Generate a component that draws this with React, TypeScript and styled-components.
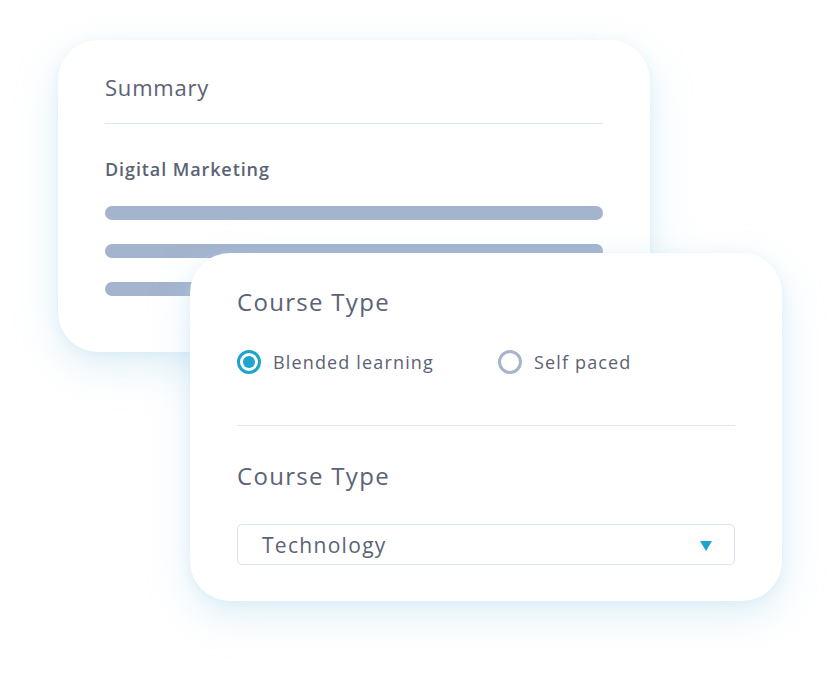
import React from 'react';
import styled, { createGlobalStyle } from 'styled-components';

const GlobalStyle = createGlobalStyle`
  html, body {
    margin: 0;
    padding: 0;
    background: #ffffff;
  }
  body {
    font-family: 'Open Sans', 'Lato', sans-serif;
    color: #565d70;
  }
`;

const Canvas = styled.div`
  width: 840px;
  height: 677px;
  padding-top: 40px;
  box-sizing: border-box;
  overflow: hidden;
`;

const Card = styled.div<{ $left: number; $width: number; $height: number; $overlap?: number }>`
  margin-left: ${(p) => p.$left}px;
  margin-top: ${(p) => (p.$overlap ? -p.$overlap : 0)}px;
  width: ${(p) => p.$width}px;
  height: ${(p) => p.$height}px;
  box-sizing: border-box;
  background: #ffffff;
  border-radius: 40px;
  box-shadow: 0 14px 40px rgba(160, 210, 235, 0.35), 0 2px 10px rgba(190, 225, 240, 0.25);
  position: relative;
`;

const SummaryBody = styled.div`
  padding: 33px 47px 0 47px;
  display: flex;
  flex-direction: column;
`;

const SummaryTitle = styled.div`
  font-size: 22px;
  line-height: 28px;
  color: #5b6275;
  letter-spacing: 0.8px;
`;

const Divider = styled.div<{ $gap: number }>`
  height: 1px;
  background: #dce8ee;
  margin-top: ${(p) => p.$gap}px;
`;

const Subtitle = styled.div`
  margin-top: 33px;
  font-size: 18px;
  font-weight: 600;
  line-height: 24px;
  color: #5b6275;
  letter-spacing: 0.9px;
`;

const Bars = styled.div`
  margin-top: 25px;
  display: flex;
  flex-direction: column;
  gap: 24px;
`;

const Bar = styled.div`
  height: 14px;
  border-radius: 7px;
  background: #a4b3ce;
`;

const CourseBody = styled.div`
  padding: 33px 47px 0 47px;
  display: flex;
  flex-direction: column;
`;

const SectionTitle = styled.div<{ $gap?: number }>`
  margin-top: ${(p) => p.$gap ?? 0}px;
  font-size: 24px;
  line-height: 32px;
  color: #5b6275;
  letter-spacing: 1.3px;
`;

const RadioRow = styled.div`
  margin-top: 32px;
  display: flex;
  align-items: center;
  height: 24px;
`;

const RadioOption = styled.label<{ $width?: number }>`
  display: flex;
  align-items: center;
  gap: 12px;
  width: ${(p) => (p.$width ? `${p.$width}px` : 'auto')};
  font-size: 18px;
  color: #5b6275;
  letter-spacing: 1.15px;
`;

const RadioCircle = styled.span<{ $checked?: boolean }>`
  width: 24px;
  height: 24px;
  box-sizing: border-box;
  border-radius: 50%;
  border: 3px solid ${(p) => (p.$checked ? '#1ea3cd' : '#a7b4cb')};
  display: flex;
  align-items: center;
  justify-content: center;

  &::after {
    content: '';
    display: ${(p) => (p.$checked ? 'block' : 'none')};
    width: 12px;
    height: 12px;
    border-radius: 50%;
    background: #1ea3cd;
  }
`;

const Select = styled.div`
  margin-top: 32px;
  height: 41px;
  box-sizing: border-box;
  border: 1px solid #dbe4ec;
  border-radius: 5px;
  display: flex;
  align-items: center;
  justify-content: space-between;
  padding: 0 22px 0 24px;
  font-size: 21px;
  color: #5b6275;
  letter-spacing: 1.3px;
`;

const Caret = styled.span`
  width: 0;
  height: 0;
  border-left: 6px solid transparent;
  border-right: 6px solid transparent;
  border-top: 10px solid #1ea3cd;
  margin-top: 2px;
`;

const App: React.FC = () => {
  return (
    <>
      <GlobalStyle />
      <Canvas>
        <Card $left={58} $width={592} $height={312}>
          <SummaryBody>
            <SummaryTitle>Summary</SummaryTitle>
            <Divider $gap={22} />
            <Subtitle>Digital Marketing</Subtitle>
            <Bars>
              <Bar />
              <Bar />
              <Bar />
            </Bars>
          </SummaryBody>
        </Card>
        <Card $left={190} $width={592} $height={348} $overlap={99}>
          <CourseBody>
            <SectionTitle>Course Type</SectionTitle>
            <RadioRow>
              <RadioOption $width={261}>
                <RadioCircle $checked />
                Blended learning
              </RadioOption>
              <RadioOption>
                <RadioCircle />
                Self paced
              </RadioOption>
            </RadioRow>
            <Divider $gap={51} />
            <SectionTitle $gap={34}>Course Type</SectionTitle>
            <Select>
              Technology
              <Caret />
            </Select>
          </CourseBody>
        </Card>
      </Canvas>
    </>
  );
};

export default App;
